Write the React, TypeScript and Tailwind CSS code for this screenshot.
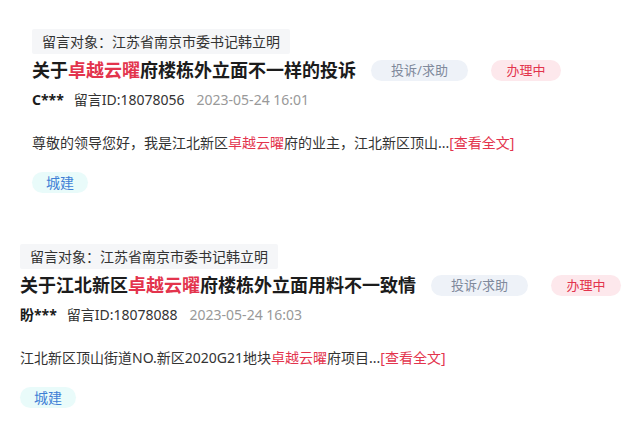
import React from "react";

type Part = { text: string; hot?: boolean };

interface Msg {
  target: string;
  title: Part[];
  user: string;
  id: string;
  time: string;
  body: Part[];
  tag: string;
  indent: string;
}

const messages: Msg[] = [
  {
    target: "留言对象：江苏省南京市委书记韩立明",
    title: [
      { text: "关于" },
      { text: "卓越云曜", hot: true },
      { text: "府楼栋外立面不一样的投诉" },
    ],
    user: "C***",
    id: "留言ID:18078056",
    time: "2023-05-24 16:01",
    body: [
      { text: "尊敬的领导您好，我是江北新区" },
      { text: "卓越云曜", hot: true },
      { text: "府的业主，江北新区顶山..." },
    ],
    tag: "城建",
    indent: "pl-[32px] pt-[29px]",
  },
  {
    target: "留言对象：江苏省南京市委书记韩立明",
    title: [
      { text: "关于江北新区" },
      { text: "卓越云曜", hot: true },
      { text: "府楼栋外立面用料不一致情" },
    ],
    user: "盼***",
    id: "留言ID:18078088",
    time: "2023-05-24 16:03",
    body: [
      { text: "江北新区顶山街道NO.新区2020G21地块" },
      { text: "卓越云曜", hot: true },
      { text: "府项目..." },
    ],
    tag: "城建",
    indent: "pl-[20px] pt-[51px]",
  },
];

function Highlight({ parts }: { parts: Part[] }) {
  return (
    <>
      {parts.map((p, i) =>
        p.hot ? (
          <span key={i} className="text-[#e3344d]">
            {p.text}
          </span>
        ) : (
          <span key={i}>{p.text}</span>
        )
      )}
    </>
  );
}

function MessageItem({ msg }: { msg: Msg }) {
  return (
    <div className={`flex flex-col items-start ${msg.indent}`}>
      {/* recipient */}
      <div className="h-[25px] leading-[25px] px-[10px] bg-[#f5f6f8] text-[14px] text-[#333] rounded-[2px]">
        {msg.target}
      </div>

      {/* title + status badges */}
      <div className="mt-[2px] h-[28px] flex items-center">
        <h3 className="text-[18px] font-bold text-[#1c1c1c] leading-[28px] whitespace-nowrap">
          <Highlight parts={msg.title} />
        </h3>
        <span className="ml-[15px] h-[21px] leading-[21px] w-[97px] text-center rounded-full bg-[#eef2f8] text-[#7f899b] text-[13px]">
          投诉/求助
        </span>
        <span className="ml-[23px] h-[21px] leading-[21px] w-[70px] text-center rounded-full bg-[#fde8ec] text-[#e3344d] text-[13px]">
          办理中
        </span>
      </div>

      {/* meta */}
      <div className="mt-[6px] h-[20px] flex items-center text-[14px] leading-[20px] whitespace-nowrap">
        <span className="font-bold text-[#1c1c1c]">{msg.user}</span>
        <span className="ml-[10px] text-[#333]">{msg.id}</span>
        <span className="ml-[12px] text-[#999]">{msg.time}</span>
      </div>

      {/* excerpt */}
      <p className="mt-[23px] text-[14px] leading-[20px] text-[#333] whitespace-nowrap">
        <Highlight parts={msg.body} />
        <span className="text-[#e3344d]">[查看全文]</span>
      </p>

      {/* category */}
      <span className="mt-[19px] h-[21px] leading-[21px] w-[56px] text-center rounded-full bg-[#e9fbfa] text-[#3f7fd6] text-[14px]">
        {msg.tag}
      </span>
    </div>
  );
}

export default function App() {
  return (
    <div className="w-[635px] h-[425px] overflow-hidden bg-white font-['Noto_Sans','Noto_Sans_CJK_SC',sans-serif]">
      {messages.map((m, i) => (
        <MessageItem key={i} msg={m} />
      ))}
    </div>
  );
}
